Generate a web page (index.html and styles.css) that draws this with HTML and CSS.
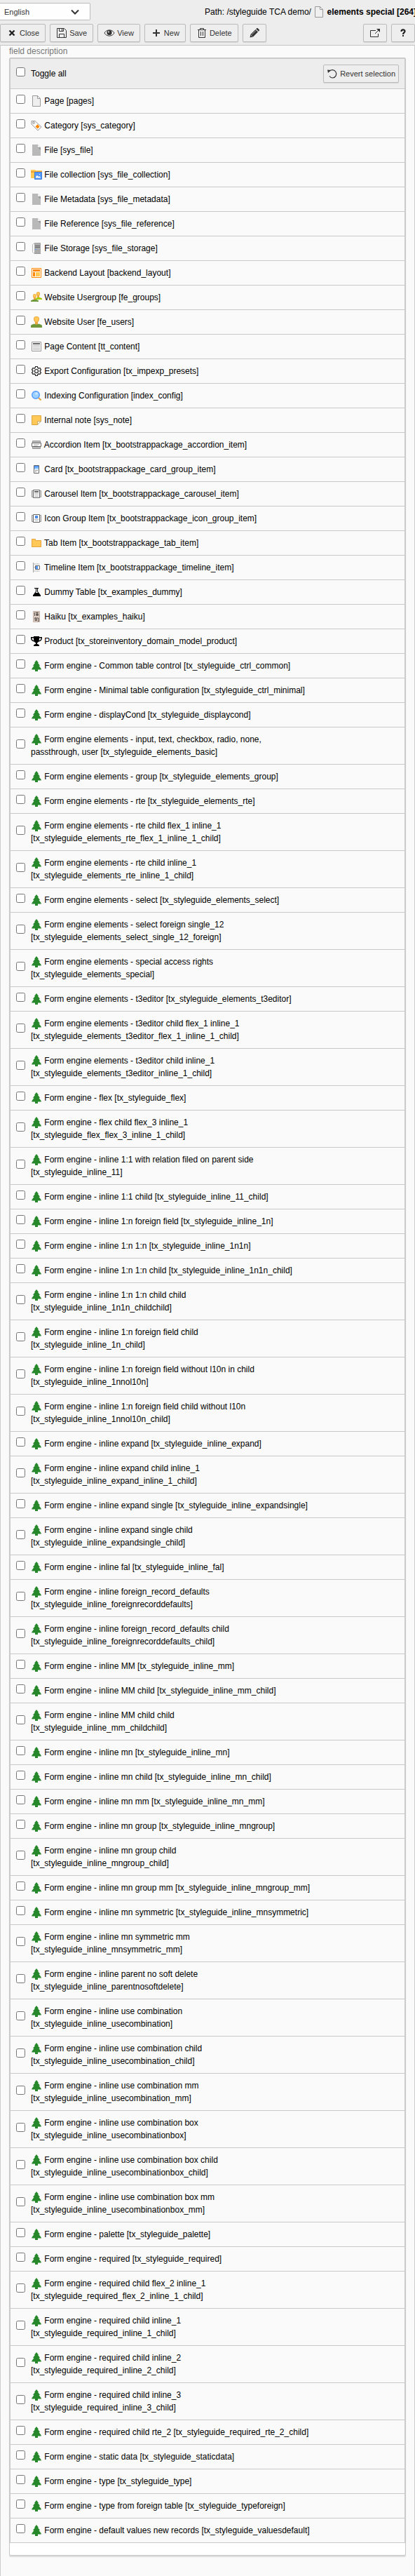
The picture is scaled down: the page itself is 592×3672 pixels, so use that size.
FILE: index.html
```html
<!DOCTYPE html>
<html lang="en">
<head>
<meta charset="utf-8">
<title>elements special</title>
<link rel="stylesheet" href="styles.css">
</head>
<body>
<svg class="sprite" aria-hidden="true">
<symbol id="page" viewBox="0 0 16 16"><path fill="#efefef" stroke="#999" d="M2.500.500h7l4 4v11h-11z"/><path fill="#fff" stroke="#999" d="M9.500.500v4h4z"/></symbol>
<symbol id="category" viewBox="0 0 16 16"><path fill="#fafafa" stroke="#999" d="M1 1.500h5l9 8.500-5 5L1 6z"/><circle cx="4" cy="4" r="1.300" fill="#fff" stroke="#999"/><path fill="#ff8700" d="M9.500 6.300l3 3.200L9.800 12.500 6.500 9.500z"/></symbol>
<symbol id="file" viewBox="0 0 16 16"><path fill="#b9b9b9" d="M2 0h8l4 4v12H2z"/><path fill="#eee" d="M10 0l4 4h-4z"/><path fill="#999" d="M10 4h4v4z"/></symbol>
<symbol id="collection" viewBox="0 0 16 16"><path fill="#ffc857" d="M0 1h6l1 1h9v11H0z"/><path fill="#e8a33d" d="M0 3h16v2H0z"/><path fill="#59f" stroke="#3d7dd8" d="M5.500 4.500h10v10h-10z"/><path fill="#fff" d="M7 12.500V11l2-2 2 2 1-1 2 2v.500zM12 7h1v1h-1z"/></symbol>
<symbol id="storage" viewBox="0 0 16 16"><path fill="#999" d="M5 0h9v16H5z"/><path fill="#aaa" d="M5 0h9v15H5z"/><path fill="none" stroke="#b9b9b9" d="M5 1.500H3.500l-1 1v11l1 1H5"/><path fill="#666" d="M6 4h7v1H6zM6 6h7v1H6z"/><path fill="#59f" d="M6 9h2v1H6z"/></symbol>
<symbol id="layout" viewBox="0 0 16 16"><path fill="#fff" stroke="#ff8700" d="M1.500 1.500h13v13h-13z"/><path fill="#ff8700" d="M3 3h10v3H3zM3 7h3v6H3z"/><path fill="#ffc857" d="M7 7h6v6H7z"/></symbol>
<symbol id="group" viewBox="0 0 16 16"><path fill="#eba53e" d="M8 2.500C8 .800 9 0 10.500 0S13 .800 13 2.500c0 1.500-.500 2.500-1 3V8H9V5.500c-.600-.500-1-1.500-1-3z"/><path fill="#ffc857" d="M9 2.500C9 1 9.500.500 10.500.500S12 1 12 2.500 11 5 10.500 5 9 4 9 2.500z"/><path fill="#a4d000" d="M7 11V9.500L9 8h4l3 1.500V11z"/><path fill="#eba53e" d="M3 5.500C3 3.800 4 3 5.500 3S8 3.800 8 5.500c0 1.500-.500 2.500-1 3V11H4V8.500c-.600-.500-1-1.500-1-3z"/><path fill="#ffc857" d="M3.500 5.500C3.500 4 4.500 3.500 5.500 3.500s2 .500 2 2S6.500 8 5.500 8s-2-1-2-2.500z"/><path fill="#70983b" d="M0 14v-1.500L3 11h5l3 1.500V14z"/></symbol>
<symbol id="user" viewBox="0 0 16 16"><path fill="#eba53e" d="M4 3.500C4 1 5.500 0 8 0s4 1 4 3.500c0 2-.800 3.500-2 4.500v4H6V8C4.800 7 4 5.500 4 3.500z"/><path fill="#ffc857" d="M5 3.500C5 1.500 6 .700 8 .700s3 .800 3 2.800S9.500 8 8 8 5 5.500 5 3.500z"/><path fill="#70983b" d="M0 16v-2.500c0-1 .700-1.500 1.500-1.800L5 10.500c1 1.500 5 1.500 6 0l3.500 1.200c.800.300 1.500.800 1.500 1.800V16z"/></symbol>
<symbol id="content" viewBox="0 0 16 16"><path fill="#fff" stroke="#999" d="M1.500 1.500h13v13h-13z"/><path fill="#666" d="M3 3h10v2H3z"/><path fill="#b9b9b9" d="M3 6h10v1H3zM3 8h10v1H3zM3 10h10v1H3zM3 12h10v1H3z"/></symbol>
<symbol id="gear" viewBox="0 0 16 16"><path fill="none" stroke="#222" stroke-width="1.200" stroke-linejoin="round" d="M6.600 1.500h2.800l.5 1.900 1.300.7 1.900-.600 1.400 2.500-1.400 1.300v1.400l1.400 1.300-1.400 2.500-1.900-.600-1.300.7-.5 1.900H6.600l-.5-1.900-1.300-.7-1.900.6-1.400-2.500 1.400-1.300V7.300L1.500 6l1.400-2.500 1.900.6 1.300-.7z"/><circle cx="8" cy="8" r="2.500" fill="none" stroke="#222" stroke-width="1.200"/></symbol>
<symbol id="search" viewBox="0 0 16 16"><path stroke="#eba53e" stroke-width="2.200" d="M11 11l3.500 3.500"/><circle cx="7" cy="7" r="5.300" fill="#9cd0ff" stroke="#59f" stroke-width="1.400"/><circle cx="8" cy="5" r="2" fill="#c5e4ff"/></symbol>
<symbol id="note" viewBox="0 0 16 16"><path fill="#ffc857" stroke="#dba63e" d="M1.500 1.500h13v8l-5 5h-8z"/><path fill="#fff3d6" stroke="#c9a868" d="M9.500 14.500v-5h5z"/></symbol>
<symbol id="accordion" viewBox="0 0 16 16"><path fill="#b9b9b9" stroke="#999" d="M2.500 2.500h11v3h-11zM2.500 10.500h11v3h-11z"/><path fill="#fff" stroke="#666" d="M1.500 5.500h13v5h-13z"/><path fill="#b9b9b9" d="M4 7h8v1H4zM4 9h6v1H4z"/></symbol>
<symbol id="card" viewBox="0 0 16 16"><path fill="#fff" stroke="#666" d="M4.500 2.500h7v11h-7z"/><path fill="#59f" d="M5 3h6v5H5z"/><path fill="#9cd0ff" d="M5 7l2-2 1 1 2-1 1 1v2H5z"/><path fill="#999" d="M6 9h4v1H6zM6 11h2v1H6z"/></symbol>
<symbol id="carousel" viewBox="0 0 16 16"><path fill="#ddd" stroke="#999" d="M1.500 3.500h3v9h-3zM11.500 3.500h3v9h-3z"/><path fill="#fff" stroke="#666" d="M3.500 2.500h9v11h-9z"/><path fill="#666" d="M5 4h6v2H5z"/><path fill="#b9b9b9" d="M5 7h6v1H5zM5 9h6v1H5zM5 11h6v1H5z"/></symbol>
<symbol id="icongroup" viewBox="0 0 16 16"><path fill="#ddd" stroke="#999" d="M1.500 3.500h3v9h-3zM11.500 3.500h3v9h-3z"/><path fill="#fff" stroke="#666" d="M3.500 2.500h9v11h-9z"/><path fill="#59f" stroke="#3d7dd8" d="M6.500 4.500h3v3h-3z"/><path fill="#b9b9b9" d="M5 9h6v1H5zM6 11h4v1H6z"/></symbol>
<symbol id="tab" viewBox="0 0 16 16"><path fill="#ffc857" stroke="#e8a33d" d="M1.500 2.500h5v2h8v9h-13z"/></symbol>
<symbol id="timeline" viewBox="0 0 16 16"><path fill="#999" d="M3 1h1v14H3z"/><path fill="#b9b9b9" d="M5 2h1v2H5zM7 2h1v2H7zM9 2h1v2H9zM11 2h1v2h-1zM5 12h1v2H5zM7 12h1v2H7zM9 12h1v2H9zM11 12h1v2h-1zM4 7h2v1H4z"/><path fill="#fff" stroke="#666" d="M6.500 5.500h6v5h-6z"/><path fill="#59f" d="M7 6h3v4H7z"/></symbol>
<symbol id="flask" viewBox="0 0 16 16"><path d="M5 2h6v1h-1v4l4 5.500V14H3v-1.500L7 7V3H5z"/><path fill="#fff" d="M8 3h1v4.500L10.500 9h-4L8 7.500z"/></symbol>
<symbol id="haiku" viewBox="0 0 16 16"><path fill="#e0d2c8" stroke="#c0aea4" d="M3.500.500h9v15h-9z"/><path fill="none" stroke="#443c38" stroke-width=".900" d="M6 1.500L5 4M5.500 3.500V7M7 2.500h4M7 4.500h4M9 1.500V7M7 6h4.500M6.500 9L5 11M6 10h5v4.500h-1M6 11.500h2.500v2H6z"/></symbol>
<symbol id="trophy" viewBox="0 0 16 16"><path d="M4 1h8v1h4c0 4-1 6-4.500 6.500L9 10.500V12c1.500 0 3 .800 3 3H4c0-2.200 1.500-3 3-3v-1.500L4.500 8.500C1 8 0 6 0 2h4zM4 3.500H1.500C1.500 5.500 2.500 7 4.500 7 4 6 4 5 4 3.500zm8 0c0 1.500 0 2.500-.500 3.500 2 0 3-1.500 3-3.500z"/></symbol>
<symbol id="tree" viewBox="0 0 16 16"><path fill="#27882b" d="M8 0l2.800 3.500-.3.500H10l2.800 3.500-.3.500H11.500L14.800 12.500v1H10V16H6v-2.500H1.300v-1L4.500 8H3.500l-.3-.5L6 4h-.5l-.3-.500z"/></symbol>
</svg>

<header class="docheader">
  <div class="nav">
    <select class="lang" aria-label="Language"><option>English</option></select>
    <div class="path">Path: /styleguide TCA demo/ <svg class="icon"><use href="#page"/></svg> <strong>elements special [264]</strong></div>
  </div>
  <div class="buttons">
    <button class="btn"><svg class="icon" viewBox="0 0 16 16"><path stroke="#222" stroke-width="2.400" d="M4.500 4.500l7 7M11.500 4.500l-7 7"/></svg>Close</button>
    <button class="btn"><svg class="icon" viewBox="0 0 16 16"><path fill="none" stroke="#333" d="M1.500 1.500h10l3 3v10h-13zM4.500 1.500v4h6v-4M4.500 14.500v-5h7v5"/><path fill="#333" d="M8 2h1v3H8z"/></svg>Save</button>
    <button class="btn"><svg class="icon" viewBox="0 0 16 16"><path fill="#fafafa" stroke="#333" d="M1 8c3-5.500 11-5.500 14 0-3 5.500-11 5.500-14 0z"/><circle cx="8" cy="7.500" r="3.600" fill="#333"/><circle cx="7" cy="6.500" r="1" fill="#fff"/></svg>View</button>
    <button class="btn"><svg class="icon" viewBox="0 0 16 16"><path fill="#333" d="M7 3h2v4h4v2H9v4H7V9H3V7h4z"/></svg>New</button>
    <button class="btn"><svg class="icon" viewBox="0 0 16 16"><path fill="none" stroke="#333" d="M3.500 3.500v11h9v-11M2 3.500h12M5.500 3V1.500h5V3M6.500 6v6M9.500 6v6"/></svg>Delete</button>
    <button class="btn" aria-label="Edit"><svg class="icon" viewBox="0 0 16 16"><path fill="#333" d="M1.500 14.500l1-4.500 7-7 3.500 3.500-7 7zM10.200 2.200L11.500 1h1L15 3.500v1l-1.200 1.300z"/><path stroke="#ededed" stroke-width=".700" d="M4 10.500l6-6M3 11l2 2"/></svg></button>
    <button class="btn push" aria-label="Open in new window"><svg class="icon" viewBox="0 0 16 16"><path fill="none" stroke="#333" d="M9 4.500H1.500v9h11V9M8 9l5-5"/><path fill="#333" d="M10 2h5v5z"/></svg></button>
    <button class="btn" aria-label="Help"><svg class="icon" viewBox="0 0 16 16"><path fill="none" stroke="#222" stroke-width="2.200" d="M5.500 6c0-3.300 5-3.300 5-.5 0 2-2.500 1.700-2.500 4.500"/><path fill="#222" d="M7 11h2v2H7z"/></svg></button>
  </div>
</header>

<main class="content">
<p class="desc">field description</p>
<div class="panel">
<div class="frame">
<table class="list">
<thead><tr><th><input type="checkbox" id="all"></th><th><label for="all">Toggle all</label></th><th class="action"><button class="btn revert"><svg class="icon" viewBox="0 0 16 16"><path fill="none" stroke="#333" stroke-width="1.200" d="M3.500 5C6 1.500 11 2 13 5.500s0 8-4.500 8.500c-2 0-3.500-1-4.500-2.500"/><path fill="#333" d="M1 2.500l5 .500-4 4z"/></svg>Revert selection</button></th></tr></thead>
<tbody>
<tr><td><input type="checkbox" id="c1"></td><td><label for="c1"><svg class="icon"><use href="#page"/></svg> Page [pages]</label></td></tr>
<tr><td><input type="checkbox" id="c2"></td><td><label for="c2"><svg class="icon"><use href="#category"/></svg> Category [sys_category]</label></td></tr>
<tr><td><input type="checkbox" id="c3"></td><td><label for="c3"><svg class="icon"><use href="#file"/></svg> File [sys_file]</label></td></tr>
<tr><td><input type="checkbox" id="c4"></td><td><label for="c4"><svg class="icon"><use href="#collection"/></svg> File collection [sys_file_collection]</label></td></tr>
<tr><td><input type="checkbox" id="c5"></td><td><label for="c5"><svg class="icon"><use href="#file"/></svg> File Metadata [sys_file_metadata]</label></td></tr>
<tr><td><input type="checkbox" id="c6"></td><td><label for="c6"><svg class="icon"><use href="#file"/></svg> File Reference [sys_file_reference]</label></td></tr>
<tr><td><input type="checkbox" id="c7"></td><td><label for="c7"><svg class="icon"><use href="#storage"/></svg> File Storage [sys_file_storage]</label></td></tr>
<tr><td><input type="checkbox" id="c8"></td><td><label for="c8"><svg class="icon"><use href="#layout"/></svg> Backend Layout [backend_layout]</label></td></tr>
<tr><td><input type="checkbox" id="c9"></td><td><label for="c9"><svg class="icon"><use href="#group"/></svg> Website Usergroup [fe_groups]</label></td></tr>
<tr><td><input type="checkbox" id="c10"></td><td><label for="c10"><svg class="icon"><use href="#user"/></svg> Website User [fe_users]</label></td></tr>
<tr><td><input type="checkbox" id="c11"></td><td><label for="c11"><svg class="icon"><use href="#content"/></svg> Page Content [tt_content]</label></td></tr>
<tr><td><input type="checkbox" id="c12"></td><td><label for="c12"><svg class="icon"><use href="#gear"/></svg> Export Configuration [tx_impexp_presets]</label></td></tr>
<tr><td><input type="checkbox" id="c13"></td><td><label for="c13"><svg class="icon"><use href="#search"/></svg> Indexing Configuration [index_config]</label></td></tr>
<tr><td><input type="checkbox" id="c14"></td><td><label for="c14"><svg class="icon"><use href="#note"/></svg> Internal note [sys_note]</label></td></tr>
<tr><td><input type="checkbox" id="c15"></td><td><label for="c15"><svg class="icon"><use href="#accordion"/></svg> Accordion Item [tx_bootstrappackage_accordion_item]</label></td></tr>
<tr><td><input type="checkbox" id="c16"></td><td><label for="c16"><svg class="icon"><use href="#card"/></svg> Card [tx_bootstrappackage_card_group_item]</label></td></tr>
<tr><td><input type="checkbox" id="c17"></td><td><label for="c17"><svg class="icon"><use href="#carousel"/></svg> Carousel Item [tx_bootstrappackage_carousel_item]</label></td></tr>
<tr><td><input type="checkbox" id="c18"></td><td><label for="c18"><svg class="icon"><use href="#icongroup"/></svg> Icon Group Item [tx_bootstrappackage_icon_group_item]</label></td></tr>
<tr><td><input type="checkbox" id="c19"></td><td><label for="c19"><svg class="icon"><use href="#tab"/></svg> Tab Item [tx_bootstrappackage_tab_item]</label></td></tr>
<tr><td><input type="checkbox" id="c20"></td><td><label for="c20"><svg class="icon"><use href="#timeline"/></svg> Timeline Item [tx_bootstrappackage_timeline_item]</label></td></tr>
<tr><td><input type="checkbox" id="c21"></td><td><label for="c21"><svg class="icon"><use href="#flask"/></svg> Dummy Table [tx_examples_dummy]</label></td></tr>
<tr><td><input type="checkbox" id="c22"></td><td><label for="c22"><svg class="icon"><use href="#haiku"/></svg> Haiku [tx_examples_haiku]</label></td></tr>
<tr><td><input type="checkbox" id="c23"></td><td><label for="c23"><svg class="icon"><use href="#trophy"/></svg> Product [tx_storeinventory_domain_model_product]</label></td></tr>
<tr><td><input type="checkbox" id="c24"></td><td><label for="c24"><svg class="icon"><use href="#tree"/></svg> Form engine - Common table control [tx_styleguide_ctrl_common]</label></td></tr>
<tr><td><input type="checkbox" id="c25"></td><td><label for="c25"><svg class="icon"><use href="#tree"/></svg> Form engine - Minimal table configuration [tx_styleguide_ctrl_minimal]</label></td></tr>
<tr><td><input type="checkbox" id="c26"></td><td><label for="c26"><svg class="icon"><use href="#tree"/></svg> Form engine - displayCond [tx_styleguide_displaycond]</label></td></tr>
<tr><td><input type="checkbox" id="c27"></td><td><label for="c27"><svg class="icon"><use href="#tree"/></svg> Form engine elements - input, text, checkbox, radio, none, passthrough, user [tx_styleguide_elements_basic]</label></td></tr>
<tr><td><input type="checkbox" id="c28"></td><td><label for="c28"><svg class="icon"><use href="#tree"/></svg> Form engine elements - group [tx_styleguide_elements_group]</label></td></tr>
<tr><td><input type="checkbox" id="c29"></td><td><label for="c29"><svg class="icon"><use href="#tree"/></svg> Form engine elements - rte [tx_styleguide_elements_rte]</label></td></tr>
<tr><td><input type="checkbox" id="c30"></td><td><label for="c30"><svg class="icon"><use href="#tree"/></svg> Form engine elements - rte child flex_1 inline_1 [tx_styleguide_elements_rte_flex_1_inline_1_child]</label></td></tr>
<tr><td><input type="checkbox" id="c31"></td><td><label for="c31"><svg class="icon"><use href="#tree"/></svg> Form engine elements - rte child inline_1 [tx_styleguide_elements_rte_inline_1_child]</label></td></tr>
<tr><td><input type="checkbox" id="c32"></td><td><label for="c32"><svg class="icon"><use href="#tree"/></svg> Form engine elements - select [tx_styleguide_elements_select]</label></td></tr>
<tr><td><input type="checkbox" id="c33"></td><td><label for="c33"><svg class="icon"><use href="#tree"/></svg> Form engine elements - select foreign single_12 [tx_styleguide_elements_select_single_12_foreign]</label></td></tr>
<tr><td><input type="checkbox" id="c34"></td><td><label for="c34"><svg class="icon"><use href="#tree"/></svg> Form engine elements - special access rights [tx_styleguide_elements_special]</label></td></tr>
<tr><td><input type="checkbox" id="c35"></td><td><label for="c35"><svg class="icon"><use href="#tree"/></svg> Form engine elements - t3editor [tx_styleguide_elements_t3editor]</label></td></tr>
<tr><td><input type="checkbox" id="c36"></td><td><label for="c36"><svg class="icon"><use href="#tree"/></svg> Form engine elements - t3editor child flex_1 inline_1 [tx_styleguide_elements_t3editor_flex_1_inline_1_child]</label></td></tr>
<tr><td><input type="checkbox" id="c37"></td><td><label for="c37"><svg class="icon"><use href="#tree"/></svg> Form engine elements - t3editor child inline_1 [tx_styleguide_elements_t3editor_inline_1_child]</label></td></tr>
<tr><td><input type="checkbox" id="c38"></td><td><label for="c38"><svg class="icon"><use href="#tree"/></svg> Form engine - flex [tx_styleguide_flex]</label></td></tr>
<tr><td><input type="checkbox" id="c39"></td><td><label for="c39"><svg class="icon"><use href="#tree"/></svg> Form engine - flex child flex_3 inline_1 [tx_styleguide_flex_flex_3_inline_1_child]</label></td></tr>
<tr><td><input type="checkbox" id="c40"></td><td><label for="c40"><svg class="icon"><use href="#tree"/></svg> Form engine - inline 1:1 with relation filed on parent side [tx_styleguide_inline_11]</label></td></tr>
<tr><td><input type="checkbox" id="c41"></td><td><label for="c41"><svg class="icon"><use href="#tree"/></svg> Form engine - inline 1:1 child [tx_styleguide_inline_11_child]</label></td></tr>
<tr><td><input type="checkbox" id="c42"></td><td><label for="c42"><svg class="icon"><use href="#tree"/></svg> Form engine - inline 1:n foreign field [tx_styleguide_inline_1n]</label></td></tr>
<tr><td><input type="checkbox" id="c43"></td><td><label for="c43"><svg class="icon"><use href="#tree"/></svg> Form engine - inline 1:n 1:n [tx_styleguide_inline_1n1n]</label></td></tr>
<tr><td><input type="checkbox" id="c44"></td><td><label for="c44"><svg class="icon"><use href="#tree"/></svg> Form engine - inline 1:n 1:n child [tx_styleguide_inline_1n1n_child]</label></td></tr>
<tr><td><input type="checkbox" id="c45"></td><td><label for="c45"><svg class="icon"><use href="#tree"/></svg> Form engine - inline 1:n 1:n child child [tx_styleguide_inline_1n1n_childchild]</label></td></tr>
<tr><td><input type="checkbox" id="c46"></td><td><label for="c46"><svg class="icon"><use href="#tree"/></svg> Form engine - inline 1:n foreign field child [tx_styleguide_inline_1n_child]</label></td></tr>
<tr><td><input type="checkbox" id="c47"></td><td><label for="c47"><svg class="icon"><use href="#tree"/></svg> Form engine - inline 1:n foreign field without l10n in child [tx_styleguide_inline_1nnol10n]</label></td></tr>
<tr><td><input type="checkbox" id="c48"></td><td><label for="c48"><svg class="icon"><use href="#tree"/></svg> Form engine - inline 1:n foreign field child without l10n [tx_styleguide_inline_1nnol10n_child]</label></td></tr>
<tr><td><input type="checkbox" id="c49"></td><td><label for="c49"><svg class="icon"><use href="#tree"/></svg> Form engine - inline expand [tx_styleguide_inline_expand]</label></td></tr>
<tr><td><input type="checkbox" id="c50"></td><td><label for="c50"><svg class="icon"><use href="#tree"/></svg> Form engine - inline expand child inline_1 [tx_styleguide_inline_expand_inline_1_child]</label></td></tr>
<tr><td><input type="checkbox" id="c51"></td><td><label for="c51"><svg class="icon"><use href="#tree"/></svg> Form engine - inline expand single [tx_styleguide_inline_expandsingle]</label></td></tr>
<tr><td><input type="checkbox" id="c52"></td><td><label for="c52"><svg class="icon"><use href="#tree"/></svg> Form engine - inline expand single child [tx_styleguide_inline_expandsingle_child]</label></td></tr>
<tr><td><input type="checkbox" id="c53"></td><td><label for="c53"><svg class="icon"><use href="#tree"/></svg> Form engine - inline fal [tx_styleguide_inline_fal]</label></td></tr>
<tr><td><input type="checkbox" id="c54"></td><td><label for="c54"><svg class="icon"><use href="#tree"/></svg> Form engine - inline foreign_record_defaults [tx_styleguide_inline_foreignrecorddefaults]</label></td></tr>
<tr><td><input type="checkbox" id="c55"></td><td><label for="c55"><svg class="icon"><use href="#tree"/></svg> Form engine - inline foreign_record_defaults child [tx_styleguide_inline_foreignrecorddefaults_child]</label></td></tr>
<tr><td><input type="checkbox" id="c56"></td><td><label for="c56"><svg class="icon"><use href="#tree"/></svg> Form engine - inline MM [tx_styleguide_inline_mm]</label></td></tr>
<tr><td><input type="checkbox" id="c57"></td><td><label for="c57"><svg class="icon"><use href="#tree"/></svg> Form engine - inline MM child [tx_styleguide_inline_mm_child]</label></td></tr>
<tr><td><input type="checkbox" id="c58"></td><td><label for="c58"><svg class="icon"><use href="#tree"/></svg> Form engine - inline MM child child [tx_styleguide_inline_mm_childchild]</label></td></tr>
<tr><td><input type="checkbox" id="c59"></td><td><label for="c59"><svg class="icon"><use href="#tree"/></svg> Form engine - inline mn [tx_styleguide_inline_mn]</label></td></tr>
<tr><td><input type="checkbox" id="c60"></td><td><label for="c60"><svg class="icon"><use href="#tree"/></svg> Form engine - inline mn child [tx_styleguide_inline_mn_child]</label></td></tr>
<tr><td><input type="checkbox" id="c61"></td><td><label for="c61"><svg class="icon"><use href="#tree"/></svg> Form engine - inline mn mm [tx_styleguide_inline_mn_mm]</label></td></tr>
<tr><td><input type="checkbox" id="c62"></td><td><label for="c62"><svg class="icon"><use href="#tree"/></svg> Form engine - inline mn group [tx_styleguide_inline_mngroup]</label></td></tr>
<tr><td><input type="checkbox" id="c63"></td><td><label for="c63"><svg class="icon"><use href="#tree"/></svg> Form engine - inline mn group child [tx_styleguide_inline_mngroup_child]</label></td></tr>
<tr><td><input type="checkbox" id="c64"></td><td><label for="c64"><svg class="icon"><use href="#tree"/></svg> Form engine - inline mn group mm [tx_styleguide_inline_mngroup_mm]</label></td></tr>
<tr><td><input type="checkbox" id="c65"></td><td><label for="c65"><svg class="icon"><use href="#tree"/></svg> Form engine - inline mn symmetric [tx_styleguide_inline_mnsymmetric]</label></td></tr>
<tr><td><input type="checkbox" id="c66"></td><td><label for="c66"><svg class="icon"><use href="#tree"/></svg> Form engine - inline mn symmetric mm [tx_styleguide_inline_mnsymmetric_mm]</label></td></tr>
<tr><td><input type="checkbox" id="c67"></td><td><label for="c67"><svg class="icon"><use href="#tree"/></svg> Form engine - inline parent no soft delete [tx_styleguide_inline_parentnosoftdelete]</label></td></tr>
<tr><td><input type="checkbox" id="c68"></td><td><label for="c68"><svg class="icon"><use href="#tree"/></svg> Form engine - inline use combination [tx_styleguide_inline_usecombination]</label></td></tr>
<tr><td><input type="checkbox" id="c69"></td><td><label for="c69"><svg class="icon"><use href="#tree"/></svg> Form engine - inline use combination child [tx_styleguide_inline_usecombination_child]</label></td></tr>
<tr><td><input type="checkbox" id="c70"></td><td><label for="c70"><svg class="icon"><use href="#tree"/></svg> Form engine - inline use combination mm [tx_styleguide_inline_usecombination_mm]</label></td></tr>
<tr><td><input type="checkbox" id="c71"></td><td><label for="c71"><svg class="icon"><use href="#tree"/></svg> Form engine - inline use combination box [tx_styleguide_inline_usecombinationbox]</label></td></tr>
<tr><td><input type="checkbox" id="c72"></td><td><label for="c72"><svg class="icon"><use href="#tree"/></svg> Form engine - inline use combination box child [tx_styleguide_inline_usecombinationbox_child]</label></td></tr>
<tr><td><input type="checkbox" id="c73"></td><td><label for="c73"><svg class="icon"><use href="#tree"/></svg> Form engine - inline use combination box mm [tx_styleguide_inline_usecombinationbox_mm]</label></td></tr>
<tr><td><input type="checkbox" id="c74"></td><td><label for="c74"><svg class="icon"><use href="#tree"/></svg> Form engine - palette [tx_styleguide_palette]</label></td></tr>
<tr><td><input type="checkbox" id="c75"></td><td><label for="c75"><svg class="icon"><use href="#tree"/></svg> Form engine - required [tx_styleguide_required]</label></td></tr>
<tr><td><input type="checkbox" id="c76"></td><td><label for="c76"><svg class="icon"><use href="#tree"/></svg> Form engine - required child flex_2 inline_1 [tx_styleguide_required_flex_2_inline_1_child]</label></td></tr>
<tr><td><input type="checkbox" id="c77"></td><td><label for="c77"><svg class="icon"><use href="#tree"/></svg> Form engine - required child inline_1 [tx_styleguide_required_inline_1_child]</label></td></tr>
<tr><td><input type="checkbox" id="c78"></td><td><label for="c78"><svg class="icon"><use href="#tree"/></svg> Form engine - required child inline_2 [tx_styleguide_required_inline_2_child]</label></td></tr>
<tr><td><input type="checkbox" id="c79"></td><td><label for="c79"><svg class="icon"><use href="#tree"/></svg> Form engine - required child inline_3 [tx_styleguide_required_inline_3_child]</label></td></tr>
<tr><td><input type="checkbox" id="c80"></td><td><label for="c80"><svg class="icon"><use href="#tree"/></svg> Form engine - required child rte_2 [tx_styleguide_required_rte_2_child]</label></td></tr>
<tr><td><input type="checkbox" id="c81"></td><td><label for="c81"><svg class="icon"><use href="#tree"/></svg> Form engine - static data [tx_styleguide_staticdata]</label></td></tr>
<tr><td><input type="checkbox" id="c82"></td><td><label for="c82"><svg class="icon"><use href="#tree"/></svg> Form engine - type [tx_styleguide_type]</label></td></tr>
<tr><td><input type="checkbox" id="c83"></td><td><label for="c83"><svg class="icon"><use href="#tree"/></svg> Form engine - type from foreign table [tx_styleguide_typeforeign]</label></td></tr>
<tr><td><input type="checkbox" id="c84"></td><td><label for="c84"><svg class="icon"><use href="#tree"/></svg> Form engine - default values new records [tx_styleguide_valuesdefault]</label></td></tr>
</tbody>
</table>
</div>
</div>
</main>
</body>
</html>
```
FILE: styles.css
```css
* { box-sizing: border-box; }

body {
  margin: 0;
  background: #fafafa;
  color: #000;
  font: 12px/18px "Liberation Sans", Arial, sans-serif;
}

.sprite { display: none; }

.icon {
  width: 16px;
  height: 16px;
  vertical-align: -4px;
}

.docheader {
  padding: 4px 0;
  background: #ededed;
  border-bottom: 1px solid #c3c3c3;
}

.nav {
  display: flex;
  align-items: center;
  justify-content: space-between;
  height: 25px;
  overflow: hidden;
}

.lang {
  width: 129px;
  height: 25px;
  padding: 0 6px;
  appearance: none;
  border: 1px solid #bbb;
  border-left: 0;
  border-radius: 0 2px 2px 0;
  color: #333;
  font: 11px "Liberation Sans", Arial, sans-serif;
  background: #fefefe url("data:image/svg+xml,%3Csvg xmlns='http://www.w3.org/2000/svg' viewBox='0 0 12 8'%3E%3Cpath d='M1 1.500l5 5 5-5' fill='none' stroke='%23333' stroke-width='2'/%3E%3C/svg%3E") no-repeat right 15px center / 12px 8px;
}

.path {
  margin-right: -2px;
  white-space: nowrap;
}

.buttons {
  display: flex;
  gap: 6px;
  padding-top: 5px;
}

.btn {
  display: inline-flex;
  align-items: center;
  gap: 3px;
  height: 26px;
  padding: 0 8px;
  background: #eee;
  border: 1px solid #bbb;
  border-radius: 2px;
  box-shadow: 0 1px 1px rgba(0, 0, 0, .1);
  color: #333;
  font: 11px "Liberation Sans", Arial, sans-serif;
  white-space: nowrap;
}

.push { margin-left: auto; }

.content {
  padding: 0 12px 29px;
  border: 1px solid #ccc;
  border-top: 0;
}

.desc {
  margin: 0;
  color: #777;
  line-height: 17px;
}

.panel {
  padding-bottom: 17px;
  background: #fff;
  border: 1px solid #c8c8c8;
  border-radius: 2px;
  box-shadow: 0 2px 1px rgba(0, 0, 0, .12);
}

.frame {
  border: 1px solid #ccc;
  border-bottom: 0;
}

.list {
  width: 100%;
  border-collapse: collapse;
  background: #fafafa;
}

.list tr { border-bottom: 1px solid #c8c8c8; }

.list th,
.list td {
  padding: 8px;
  text-align: left;
  font-weight: normal;
  vertical-align: middle;
}

.list thead { background: #ededed; }

.list th:first-child,
.list td:first-child {
  width: 1px;
  padding-right: 0;
}

.list .action { width: 1px; }

.list .revert {
  display: flex;
  padding: 0 4px;
}

.list input {
  display: block;
  width: 13px;
  height: 13px;
  margin: 0 0 5px;
}

.list label { display: block; }
```
